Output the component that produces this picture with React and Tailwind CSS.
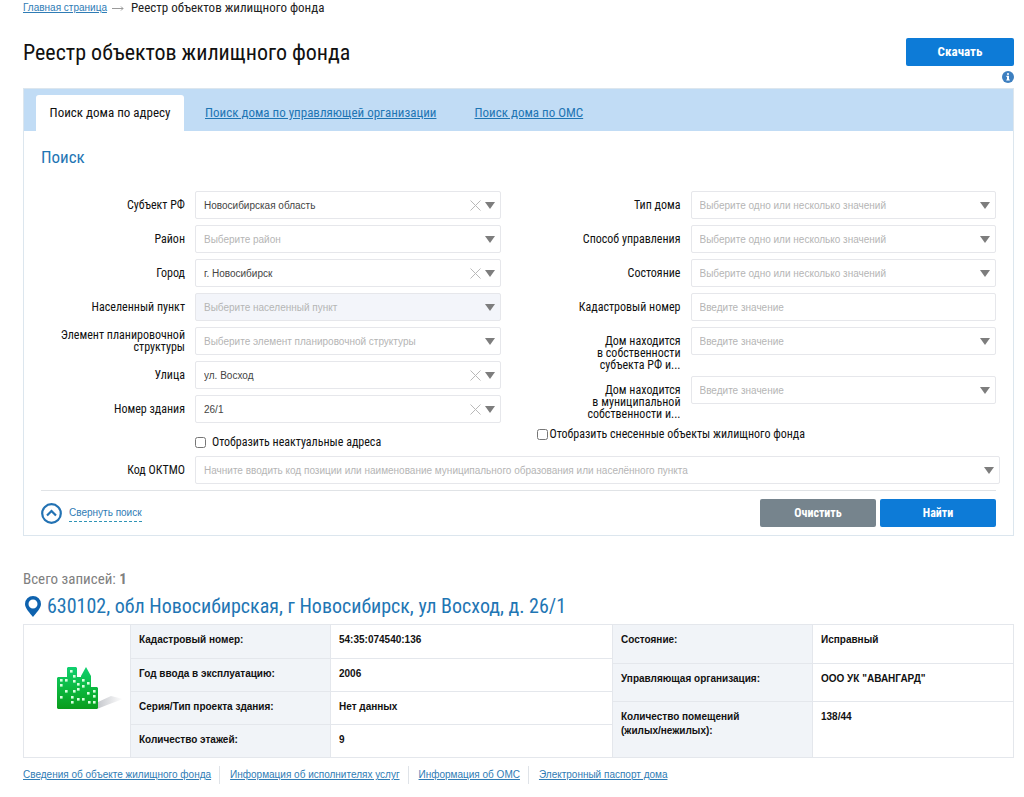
import React, { useState } from 'react';

const addressFields = [
  { id: 'region', label: 'Субъект РФ', value: 'Новосибирская область' },
  { id: 'district', label: 'Район', placeholder: 'Выберите район' },
  { id: 'city', label: 'Город', value: 'г. Новосибирск' },
  { id: 'settlement', label: 'Населенный пункт', placeholder: 'Выберите населенный пункт', disabled: true },
  { id: 'planning', label: 'Элемент планировочной структуры', placeholder: 'Выберите элемент планировочной структуры' },
  { id: 'street', label: 'Улица', value: 'ул. Восход' },
  { id: 'building', label: 'Номер здания', value: '26/1' },
];

const houseFields = [
  { id: 'houseType', label: 'Тип дома', placeholder: 'Выберите одно или несколько значений' },
  { id: 'management', label: 'Способ управления', placeholder: 'Выберите одно или несколько значений' },
  { id: 'state', label: 'Состояние', placeholder: 'Выберите одно или несколько значений' },
  { id: 'cadastre', label: 'Кадастровый номер', placeholder: 'Введите значение', text: true },
  { id: 'regionOwned', label: 'Дом находится\nв собственности\nсубъекта РФ и...', placeholder: 'Введите значение' },
  { id: 'cityOwned', label: 'Дом находится\nв муниципальной\nсобственности и...', placeholder: 'Введите значение' },
];

const passportRows = [
  ['Кадастровый номер:', '54:35:074540:136'],
  ['Год ввода в эксплуатацию:', '2006'],
  ['Серия/Тип проекта здания:', 'Нет данных'],
  ['Количество этажей:', '9'],
];

const stateRows = [
  ['Состояние:', 'Исправный', 'h-[38px]'],
  ['Управляющая организация:', 'ООО УК "АВАНГАРД"', 'h-[38px]'],
  ['Количество помещений\n(жилых/нежилых):', '138/44', 'h-[55px]'],
];

const links = [
  'Сведения об объекте жилищного фонда',
  'Информация об исполнителях услуг',
  'Информация об ОМС',
  'Электронный паспорт дома',
];

const Arrow = () => (
  <svg className="pointer-events-none w-[10px] h-[7px] shrink-0" viewBox="0 0 10 7">
    <path d="M0 0h10L5 7z" fill="#7d7d7d" />
  </svg>
);

const inputStyle =
  "block w-full h-7 rounded-[2px] border border-[#e6e7eb] px-2 text-[10px] font-['Liberation_Sans',Arial,sans-serif] placeholder:text-[#b5b5b5] outline-none appearance-none";

const SelectBox = ({ field }) => {
  const [value, setValue] = useState(field.value || '');
  return (
    <div className="relative flex-1 min-w-0">
      <select
        id={field.id}
        value={value}
        disabled={field.disabled}
        onChange={(e) => setValue(e.target.value)}
        className={`${inputStyle} ${value ? 'text-[#444]' : 'text-[#b5b5b5]'} ${field.disabled ? 'bg-[#f3f5fa] opacity-100' : 'bg-white'}`}
      >
        <option value="">{field.placeholder || 'Выберите значение'}</option>
        {field.value && <option value={field.value}>{field.value}</option>}
      </select>
      <div className="absolute inset-y-0 right-[6px] flex items-center gap-1 pointer-events-none">
        {value && (
          <button type="button" aria-label="Сбросить" onClick={() => setValue('')} className="pointer-events-auto">
            <svg className="w-[11px] h-[11px]" viewBox="0 0 11 11">
              <path d="M0.5 0.5l10 10M10.5 0.5l-10 10" stroke="#b9b9b9" fill="none" />
            </svg>
          </button>
        )}
        <Arrow />
      </div>
    </div>
  );
};

const Field = ({ field }) => (
  <div className="flex items-start gap-[10px]">
    <label
      htmlFor={field.id}
      className="w-36 h-7 shrink-0 flex items-center justify-end text-right text-xs leading-3 whitespace-pre-line text-[#111]"
    >
      {field.label}
    </label>
    {field.text ? (
      <div className="flex-1 min-w-0">
        <input id={field.id} type="text" placeholder={field.placeholder} className={inputStyle} />
      </div>
    ) : (
      <SelectBox field={field} />
    )}
  </div>
);

const windows = [
  [13, 3], [16, 8], [16, 13], [3, 12], [8, 12], [3, 17], [20, 16], [25, 12], [25, 18], [30, 15], [8, 23], [16, 23],
  [20, 21], [3, 29], [14, 29], [14, 34], [20, 31], [25, 31], [30, 25], [36, 23], [36, 28], [36, 34], [31, 34],
];

const Building = () => (
  <svg className="w-[66px] h-[44px]" viewBox="0 0 66 44">
    <defs>
      <linearGradient id="wall" x1="0" y1="0" x2="0" y2="1">
        <stop offset="0" stopColor="#10d070" />
        <stop offset="0.5" stopColor="#0cb940" />
        <stop offset="1" stopColor="#0a9c1c" />
      </linearGradient>
      <linearGradient id="shade" x1="0" y1="0" x2="1" y2="0">
        <stop offset="0" stopColor="#8b8f99" stopOpacity="0.5" />
        <stop offset="1" stopColor="#8b8f99" stopOpacity="0" />
      </linearGradient>
    </defs>
    <path d="M40 42L41 35L54 29L66 32L50 38z" fill="url(#shade)" />
    <path d="M0 11l1-1h9V1l1-1h8l1 1v9h4V9l5-9 5 9v11h6l1 1v20l-1 1H1l-1-1z" fill="url(#wall)" />
    {windows.map(([x, y]) => (
      <rect key={`${x}-${y}`} x={x} y={y} width="2.600" height="2.600" fill="#d8ffde" />
    ))}
  </svg>
);

const DataTable = ({ rows, className }) => (
  <table className={`${className} border-collapse text-[10px] leading-[14px] font-bold text-[#111]`}>
    <tbody>
      {rows.map(([name, value, height], i) => (
        <tr key={name} className={`${height || 'h-[33px]'} ${i > 0 ? 'border-t border-[#e4e7ec]' : ''}`}>
          <th scope="row" className="w-[200px] px-2 pt-2 text-left align-top whitespace-pre-line bg-[#f1f4f8] border-x border-[#e4e7ec]">
            {name}
          </th>
          <td className="px-2 pt-2 align-top">{value}</td>
        </tr>
      ))}
    </tbody>
  </table>
);

const App = () => {
  return (
    <div className="min-h-screen bg-white pl-[23px] pr-[10px] font-['Liberation_Sans',Arial,sans-serif]">
      {/* Breadcrumbs */}
      <nav className="flex items-center gap-[5px] h-4 text-[13px] leading-4 text-[#222] font-['Roboto_Condensed','Roboto',sans-serif]">
        <a href="#main" className="text-[10px] text-[#2f7cb5] underline font-['Liberation_Sans',Arial,sans-serif]">Главная страница</a>
        <svg className="w-3 h-[5px] mr-[2px]" viewBox="0 0 12 5" fill="none" stroke="#9a9a9a">
          <path d="M0 2.500h11M9 0.500l2 2-2 2" />
        </svg>
        <span>Реестр объектов жилищного фонда</span>
      </nav>

      <header className="mt-[22px] flex items-start justify-between font-['Roboto_Condensed','Roboto',sans-serif]">
        <h1 className="text-[22px] leading-[30px] text-[#111]">Реестр объектов жилищного фонда</h1>
        <div className="flex flex-col items-end gap-[5px]">
          <button type="button" className="w-[108px] h-7 rounded-[2px] bg-[#0d7bd7] text-white text-[13px] font-bold">Скачать</button>
          <svg className="w-3 h-3" viewBox="0 0 12 12">
            <circle cx="6" cy="6" r="6" fill="#3d7fc0" />
            <path d="M5 2.200h2v1.600H5zM4.400 4.800H7v3.600h.8v1.200H4.300V8.400H5V6h-.6z" fill="#fff" />
          </svg>
        </div>
      </header>

      {/* Search panel */}
      <section className="mt-[5px] border border-[#dce6ee] font-['Roboto_Condensed','Roboto',sans-serif]">
        <div className="flex items-end h-[42px] bg-[#c1dcf5] text-[13px] text-[#1f76b4]">
          <a href="#address" className="ml-3 w-[148px] h-9 flex items-center justify-center rounded-t-[3px] bg-white text-[#111]">Поиск дома по адресу</a>
          <a href="#company" className="ml-[21px] h-9 flex items-center underline">Поиск дома по управляющей организации</a>
          <a href="#oms" className="ml-[38px] h-9 flex items-center underline">Поиск дома по ОМС</a>
        </div>

        <form className="px-[17px] pb-2" onSubmit={(e) => e.preventDefault()}>
          <h2 className="mt-[14px] text-[17px] leading-6 text-[#1f76b4]">Поиск</h2>

          <div className="mt-[22px] grid grid-cols-2 gap-x-9">
            <div className="flex flex-col gap-[6px]">
              {addressFields.map((field) => <Field key={field.id} field={field} />)}
              <label className="mt-[5px] ml-[154px] flex items-center gap-[6px] h-4 text-xs text-[#111]">
                <input type="checkbox" className="w-[11px] h-[11px]" />
                Отобразить неактуальные адреса
              </label>
            </div>
            <div className="flex flex-col gap-[6px]">
              {houseFields.slice(0, 4).map((field) => <Field key={field.id} field={field} />)}
              <div className="flex flex-col gap-[13px] pt-2">
                {houseFields.slice(4).map((field) => (
                  <div key={field.id} className="flex items-start gap-[10px]">
                    <label htmlFor={field.id} className="w-36 shrink-0 text-right text-xs leading-3 whitespace-pre-line text-[#111]">{field.label}</label>
                    <div className="flex flex-1 -mt-2"><SelectBox field={field} /></div>
                  </div>
                ))}
              </div>
              <label className="flex items-center gap-[2px] h-4 text-xs text-[#111]">
                <input type="checkbox" className="w-[11px] h-[11px]" />
                Отобразить снесенные объекты жилищного фонда
              </label>
            </div>
          </div>

          <div className="mt-[6px] -mr-1 flex items-center gap-[10px]">
            <label htmlFor="oktmo" className="w-36 shrink-0 text-right text-xs text-[#111]">Код ОКТМО</label>
            <div className="relative flex-1">
              <input
                id="oktmo"
                type="text"
                placeholder="Начните вводить код позиции или наименование муниципального образования или населённого пункта"
                className={inputStyle}
              />
              <div className="absolute inset-y-0 right-[6px] flex items-center pointer-events-none"><Arrow /></div>
            </div>
          </div>

          <div className="mt-[6px] pt-2 border-t border-[#e0e3e6] flex items-center justify-between">
            <button type="button" className="flex items-center gap-[7px] text-[10px] text-[#2f7cb5] font-['Liberation_Sans',Arial,sans-serif]">
              <svg className="w-[21px] h-[21px]" viewBox="0 0 21 21" fill="none" stroke="#2372b3">
                <circle cx="10.500" cy="10.500" r="9.300" strokeWidth="2.200" />
                <path d="M6 12.500l4.500-4.500 4.500 4.500" strokeWidth="2.200" />
              </svg>
              <span className="border-b border-dashed border-[#2f93b5] leading-4">Свернуть поиск</span>
            </button>
            <div className="flex gap-1 text-xs font-bold text-white">
              <button type="reset" className="w-[116px] h-7 rounded-[2px] bg-[#76848d]">Очистить</button>
              <button type="submit" className="w-[116px] h-7 rounded-[2px] bg-[#0d7bd7]">Найти</button>
            </div>
          </div>
        </form>
      </section>

      {/* Results */}
      <section className="mt-[34px]">
        <div className="font-['Roboto_Condensed','Roboto',sans-serif]">
          <p className="text-[15px] leading-[18px] text-[#808080]">Всего записей: <b>1</b></p>
          <h3 className="mt-1 flex items-center gap-[6px] pl-[2px] text-xl leading-7">
            <svg className="w-4 h-[21px]" viewBox="0 0 16 21">
              <path fillRule="evenodd" d="M8 0a8 8 0 0 1 8 8c0 4.500-5 9-8 13C5 17 0 12.500 0 8a8 8 0 0 1 8-8zm0 3.500a4.500 4.500 0 1 0 0 9 4.500 4.500 0 0 0 0-9z" fill="#0e62ae" />
            </svg>
            <a href="#house" className="text-[#1f76b4]">630102, обл Новосибирская, г Новосибирск, ул Восход, д. 26/1</a>
          </h3>
        </div>

        <div className="mt-1 flex items-stretch border border-[#e4e7ec]">
          <div className="w-[106px] shrink-0 flex items-center pl-[33px] pb-1">
            <Building />
          </div>
          <DataTable rows={passportRows} className="flex-1" />
          <DataTable rows={stateRows} className="w-[401px] shrink-0" />
        </div>

        <ul className="mt-2 flex text-[10px] leading-[18px]">
          {links.map((text, i) => (
            <li key={text} className={i < links.length - 1 ? 'pr-2 mr-[10px] border-r border-[#dfe3e8]' : ''}>
              <a href="#info" className="text-[#2f7cb5] underline">{text}</a>
            </li>
          ))}
        </ul>
      </section>
    </div>
  );
};

export default App;
